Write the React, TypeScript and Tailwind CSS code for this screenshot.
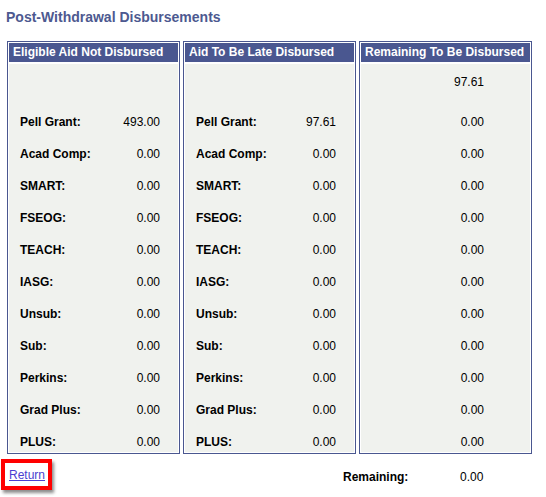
const LABELS = [
  "Pell Grant:",
  "Acad Comp:",
  "SMART:",
  "FSEOG:",
  "TEACH:",
  "IASG:",
  "Unsub:",
  "Sub:",
  "Perkins:",
  "Grad Plus:",
  "PLUS:",
];

const notDisbursed = ["493.00", ...Array(10).fill("0.00")];
const lateDisbursed = ["97.61", ...Array(10).fill("0.00")];
const remaining = Array(11).fill("0.00");

function Panel({
  title,
  top,
  values,
  showLabels,
}: {
  title: string;
  top?: string;
  values: string[];
  showLabels: boolean;
}) {
  return (
    <div className="w-[173px] border border-[#4a5790] bg-white p-px">
      <div className="h-[19px] bg-[#4a5790] pl-[4px] text-[12px] font-bold leading-[19px] text-white">
        {title}
      </div>
      <div className="mt-[2px] bg-[#f0f2ee] pb-[3px] pt-[11px]">
        <div className="mb-[26px] flex h-[14px] justify-end pr-[46px] text-[12px] leading-[14px]">
          {top}
        </div>
        <div className="flex flex-col gap-[18px]">
          {values.map((v, i) => (
            <div
              key={i}
              className={`flex h-[14px] items-center text-[12px] leading-[14px] ${
                showLabels ? "justify-between pl-[11px] pr-[18px]" : "justify-end pr-[46px]"
              }`}
            >
              {showLabels && <span className="font-bold">{LABELS[i]}</span>}
              <span>{v}</span>
            </div>
          ))}
        </div>
      </div>
    </div>
  );
}

export default function App() {
  return (
    <div
      className="h-[497px] w-[546px] bg-white text-black"
      style={{ fontFamily: '"Liberation Sans", Arial, sans-serif' }}
    >
      <div className="pl-[6px] pt-[9px] text-[14px] font-bold leading-[16px] text-[#4d5990]">
        Post-Withdrawal Disbursements
      </div>
      <div className="mt-[16px] flex gap-[3px] pl-[7px]">
        <Panel title="Eligible Aid Not Disbursed" values={notDisbursed} showLabels />
        <Panel title="Aid To Be Late Disbursed" values={lateDisbursed} showLabels />
        <Panel title="Remaining To Be Disbursed" top="97.61" values={remaining} showLabels={false} />
      </div>
      <div className="mt-[5px] flex items-start">
        <div className="ml-[1px] flex h-[31px] w-[51px] items-center border-[4px] border-[#ff0000] pl-[4px] shadow-[2px_3px_3px_rgba(0,0,0,0.45)]">
          <span className="text-[12px] leading-[14px] text-[#4a3fd0] underline">Return</span>
        </div>
        <div className="ml-[291px] mt-[11px] flex text-[12px] leading-[14px]">
          <span className="font-bold">Remaining:</span>
          <span className="w-[75px] text-right">0.00</span>
        </div>
      </div>
    </div>
  );
}
